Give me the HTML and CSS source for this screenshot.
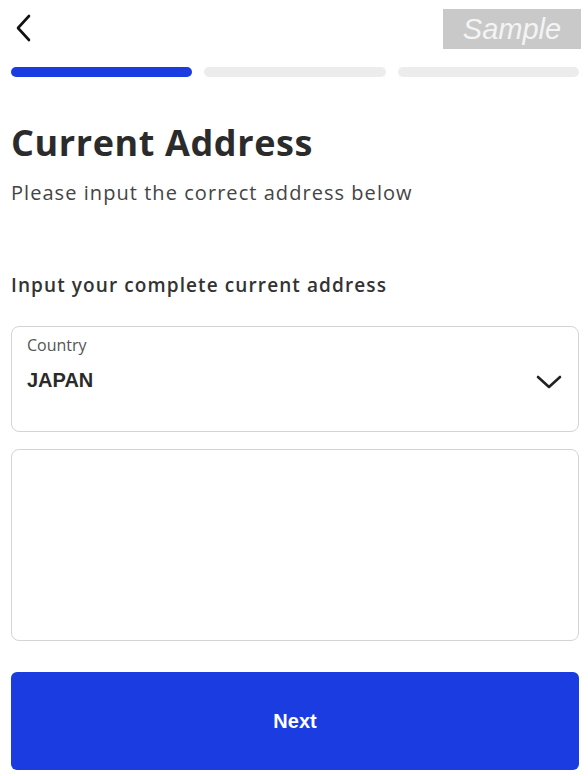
FILE: index.html
```html
<!DOCTYPE html>
<html>
<head>
<meta charset="utf-8">
<link rel="stylesheet" href="styles.css">
</head>
<body>
<div class="page">
  <header class="topbar">
    <button class="back" aria-label="Back">
      <svg width="20" height="28" viewBox="0 0 20 28"><path d="M15 2 L4 14 L15 26" fill="none" stroke="#111" stroke-width="2.6" stroke-linecap="round" stroke-linejoin="round"/></svg>
    </button>
    <div class="sample">Sample</div>
  </header>
  <div class="progress">
    <span class="seg active"></span>
    <span class="seg"></span>
    <span class="seg"></span>
  </div>
  <h1 class="title">Current Address</h1>
  <p class="subtitle">Please input the correct address below</p>
  <p class="section">Input your complete current address</p>
  <div class="field select">
    <div class="field-text">
      <span class="label">Country</span>
      <span class="value">JAPAN</span>
    </div>
    <svg class="chev" width="26" height="16" viewBox="0 0 26 16"><path d="M2 3 L13 13 L24 3" fill="none" stroke="#222" stroke-width="2.6" stroke-linecap="round" stroke-linejoin="round"/></svg>
  </div>
  <div class="field area"></div>
  <button class="next">Next</button>
</div>
</body>
</html>
```
FILE: styles.css
```css
* { box-sizing: border-box; }
html, body { margin: 0; padding: 0; background: #fff; }
body { font-family: "Open Sans", "Liberation Sans", sans-serif; color: #2a2a2a; }
.page { width: 588px; padding: 0 9px 0 11px; }
.topbar { display: flex; justify-content: space-between; align-items: flex-start; height: 67px; padding-top: 9px; }
.back { border: 0; background: none; padding: 0; margin: 4px 0 0 3px; width: 22px; height: 30px; display: flex; align-items: center; }
.sample { width: 138px; height: 40px; background: #c9c9c9; color: #f4f4f4; font-family: "Liberation Sans", sans-serif; font-style: italic; font-size: 29px; display: flex; align-items: center; justify-content: center; margin-right: -2px; }
.progress { display: grid; grid-template-columns: repeat(3, 1fr); gap: 12px; height: 10px; }
.seg { background: #ececec; border-radius: 5px; }
.seg.active { background: #1a3ce0; }
.title { font-size: 36px; font-weight: 700; margin: 44px 0 0; color: #2b2b2b; letter-spacing: 0.6px; line-height: 44px; }
.subtitle { font-size: 20px; color: #444; margin: 16px 0 0; line-height: 24px; letter-spacing: 1.05px; }
.section { font-size: 19px; font-weight: 600; color: #333; margin: 68px 0 0; line-height: 24px; letter-spacing: 1.1px; }
.field { border: 1.5px solid #d4d4d4; border-radius: 8px; }
.select { margin-top: 29px; height: 106px; display: flex; justify-content: space-between; align-items: flex-start; padding: 8px 16px 0 15px; }
.field-text { display: flex; flex-direction: column; }
.label { font-size: 16px; color: #555; line-height: 20px; }
.value { font-size: 20px; font-weight: 700; color: #2a2a2a; margin-top: 14px; line-height: 22px; font-family: "Liberation Sans", sans-serif; }
.chev { margin-top: 39px; }
.area { margin-top: 17px; height: 192px; }
.next { display: block; width: 100%; margin-top: 31px; height: 98px; border: 0; border-radius: 6px; background: #1a3ce0; color: #fff; font-family: "Liberation Sans", sans-serif; font-size: 20px; font-weight: 700; }
```
